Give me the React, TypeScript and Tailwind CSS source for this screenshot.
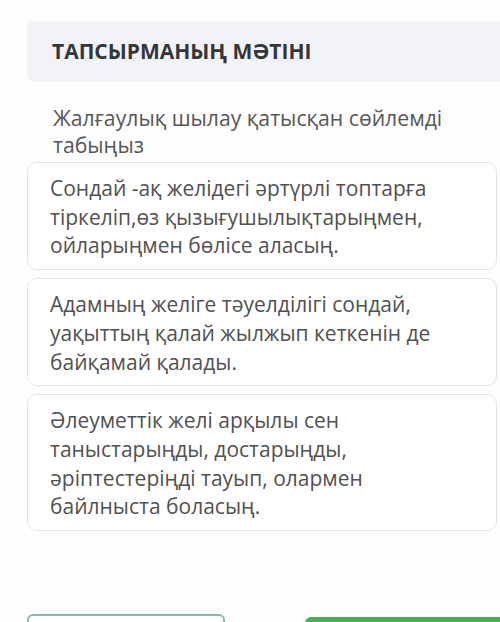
const answers = [
  [
    "Сондай -ақ желідегі әртүрлі топтарға",
    "тіркеліп,өз қызығушылықтарыңмен,",
    "ойларыңмен бөлісе аласың.",
  ],
  [
    "Адамның желіге тәуелділігі сондай,",
    "уақыттың қалай жылжып кеткенін де",
    "байқамай қалады.",
  ],
  [
    "Әлеуметтік желі арқылы сен",
    "таныстарыңды, достарыңды,",
    "әріптестеріңді тауып, олармен",
    "байлныста боласың.",
  ],
]

function AnswerCard({ lines }: { lines: string[] }) {
  return (
    <div className="rounded-[10px] border border-[#e3e4e6] bg-white px-[22px] pt-[11px] pb-[9px] text-[21px] leading-[28.7px] text-[#515151]">
      {lines.map((line, i) => (
        <div key={i} className="whitespace-nowrap">
          {line}
        </div>
      ))}
    </div>
  )
}

export default function App() {
  return (
    <div
      className="min-h-[622px] overflow-hidden bg-[#fdfdfd] pt-[21px] pl-[27px] pr-[3px]"
      style={{ fontFamily: '"Open Sans", "Noto Sans", sans-serif' }}
    >
      <div className="-mr-[10px] flex h-[61px] items-center rounded-[8px] bg-[#f2f3f7] pl-[25px]">
        <h2 className="text-[21px] font-bold text-[#33373c]">
          ТАПСЫРМАНЫҢ МӘТІНІ
        </h2>
      </div>

      <p className="mt-[22px] pl-[26px] text-[21.2px] leading-[27px] text-[#575757]">
        Жалғаулық шылау қатысқан сөйлемді
        <br />
        табыңыз
      </p>

      <div className="mt-[4px] flex flex-col gap-[8px]">
        {answers.map((lines, i) => (
          <AnswerCard key={i} lines={lines} />
        ))}
      </div>

      <div className="mt-[83px] flex items-start justify-between">
        <button className="h-[48px] w-[198px] rounded-[6px] border-2 border-[#8fb8a8] bg-white" />
        <button className="-mr-[3px] mt-[3px] h-[48px] w-[195px] rounded-l-[6px] bg-[#4caf57]" />
      </div>
    </div>
  )
}
